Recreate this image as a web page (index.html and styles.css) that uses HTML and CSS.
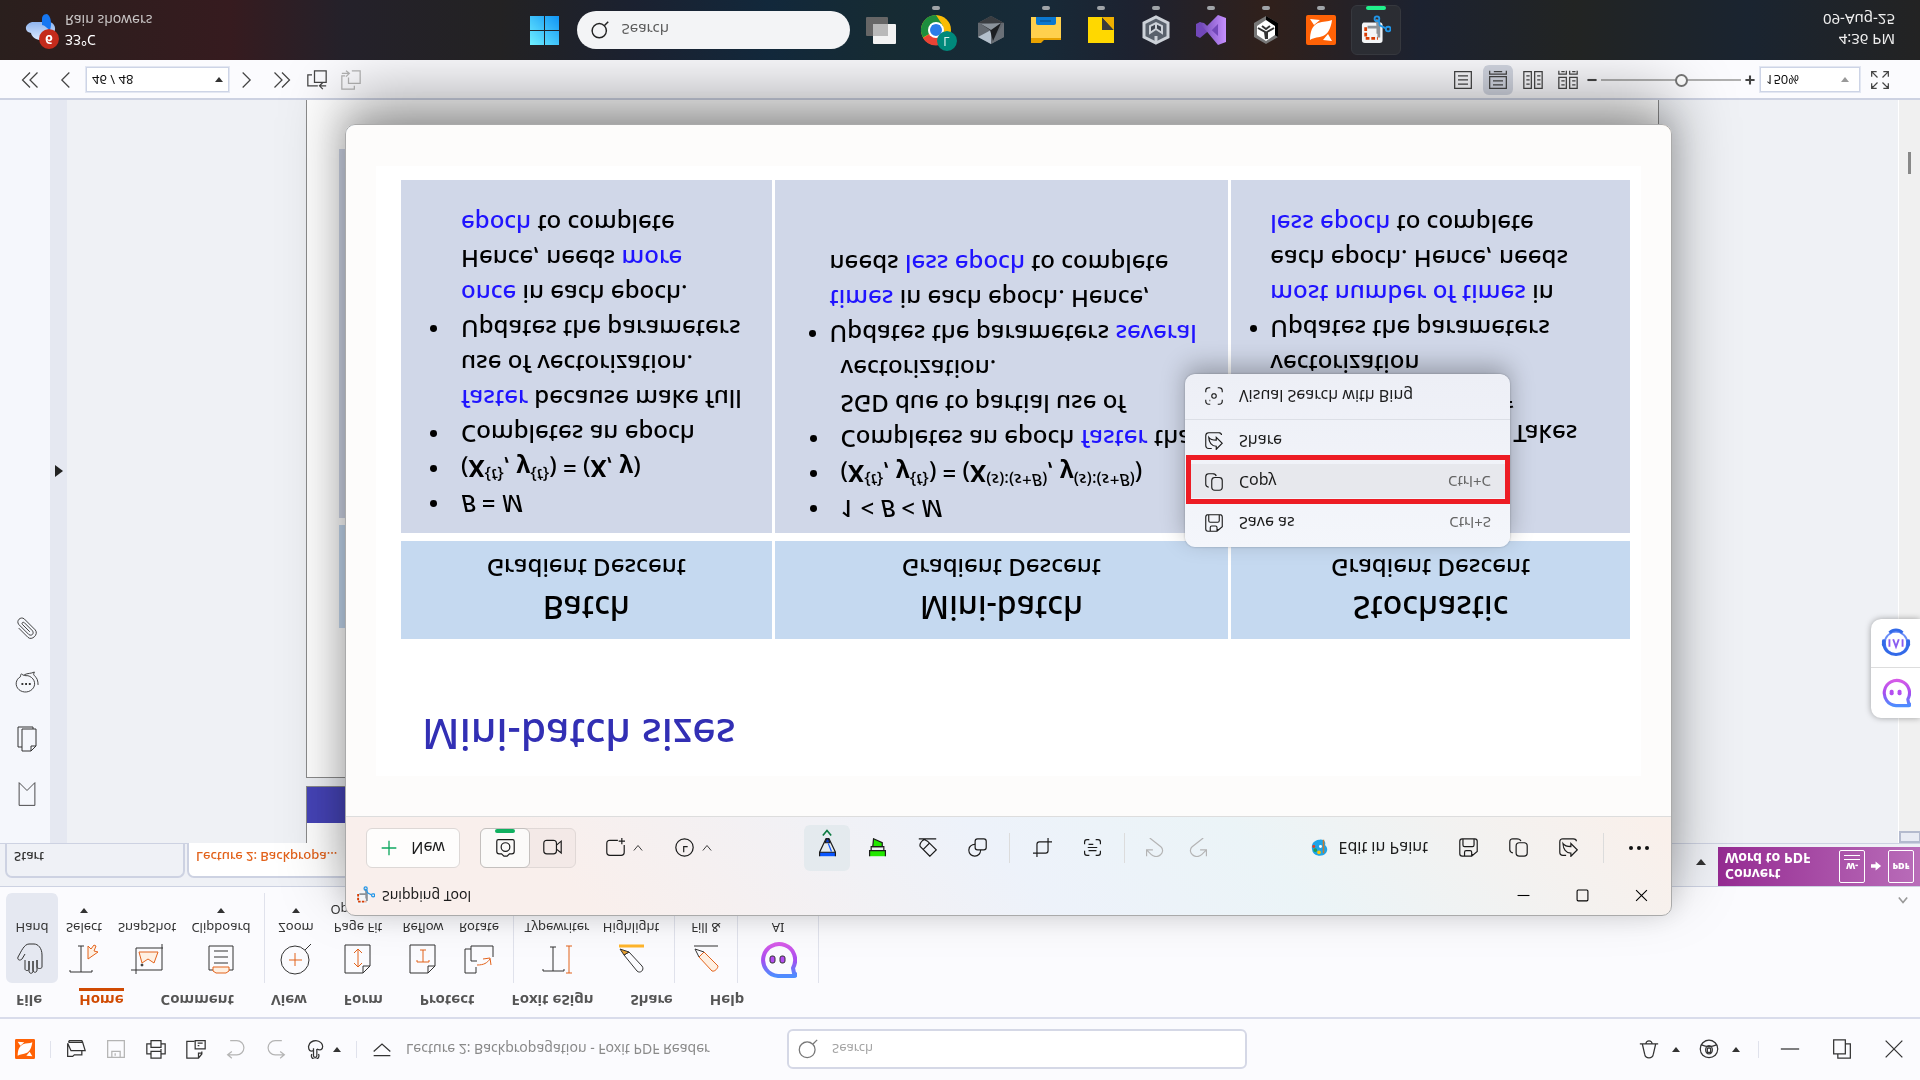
FILE: index.html
```html
<!DOCTYPE html>
<html lang="en">
<head>
<meta charset="utf-8">
<title>Lecture 2: Backpropagation - Foxit PDF Reader</title>
<link rel="stylesheet" href="styles.css">
</head>
<body>
<svg class="sprite" aria-hidden="true">
  <defs>
    <linearGradient id="g-ai" x1="0" y1="0" x2="0" y2="1"><stop offset="0" stop-color="#4d8dff"/><stop offset=".5" stop-color="#a64df0"/><stop offset="1" stop-color="#d65ae8"/></linearGradient>
    <linearGradient id="g-cloud" x1="0" y1="0" x2="0" y2="1"><stop offset="0" stop-color="#dbe9ff"/><stop offset="1" stop-color="#8fb4ee"/></linearGradient>
    <linearGradient id="g-vs" x1="0" y1="0" x2="1" y2="0"><stop offset="0" stop-color="#6a45b0"/><stop offset="1" stop-color="#c690ff"/></linearGradient>
    <linearGradient id="g-start" x1="0" y1="0" x2="1" y2="1"><stop offset="0" stop-color="#6ff0ff"/><stop offset="1" stop-color="#1094f5"/></linearGradient>
  </defs>
  <symbol id="foxit" viewBox="0 0 30 30"><rect width="30" height="30" rx="2" fill="#ff6206"/><path d="M4 5c0 8 2 14 8 17 5 2 10 1 14 3-1-8-4-14-9-16-4-2-9-1-13-4z" fill="#fff"/><path d="M17 5l9-1-4 7zM4 26l10-1-6-5z" fill="#fff"/></symbol>
  <symbol id="open" viewBox="0 0 24 24"><path d="M2 19V3h6l2 2h9v5M2 19l4-9h17l-3 10H3M3 20l1 2h15l1-2"/></symbol>
  <symbol id="disk" viewBox="0 0 24 24"><path d="M2 2h20v20H2zM7 2v7h10V2M11 4v3"/></symbol>
  <symbol id="printer" viewBox="0 0 24 24"><path d="M6 6V1h12v5M6 18H1V6h5M18 6h5v12h-5M6 1v8h12V1M6 14v8h12v-8zM17 11h2"/></symbol>
  <symbol id="pagecopy" viewBox="0 0 24 24"><path d="M10 21H1V1h14l4 5v3M15 1v6h4M11 12h12v10H11zM14 19h6M14 16h2"/></symbol>
  <symbol id="undo" viewBox="0 0 24 24"><path d="M7 1 2 5l5 4M2 5h11a8 8 0 0 1 0 17H5"/></symbol>
  <symbol id="redo" viewBox="0 0 24 24"><path d="m17 1 5 4-5 4M22 5H11a8 8 0 0 0 0 17h8"/></symbol>
  <symbol id="touch" viewBox="0 0 24 24"><path d="M9 13V4a2 2 0 0 1 4 0v8M9 10c-4-2-6 1-6 5 1 4 4 7 9 7s8-4 8-7c0-4-3-5-7-3M7 6a4.500 4.500 0 1 1 8 0"/></symbol>
  <symbol id="dropline" viewBox="0 0 24 24"><path d="M2 4h20M2 9l10 9 10-9"/></symbol>
  <symbol id="search" viewBox="0 0 24 24"><circle cx="11" cy="11" r="9.500"/><path d="m18 18 5 5"/></symbol>
  <symbol id="bell" viewBox="0 0 24 24"><path d="M1 18h22M4 18 7 5c1-5 9-5 10 0l3 13M8 18c1 5 7 5 8 0"/></symbol>
  <symbol id="account" viewBox="0 0 24 24"><circle cx="12" cy="12" r="10.500"/><ellipse cx="12" cy="11" rx="4" ry="5"/><path d="M3 17c6-3 12-3 18 0M10 8v5h4V8z"/></symbol>
  <symbol id="restore" viewBox="0 0 24 24"><path d="M2 6h14v17H2zM7 6V1h15v17h-6"/></symbol>
  <symbol id="close" viewBox="0 0 24 24"><path d="m2 2 20 20M22 2 2 22"/></symbol>
  <symbol id="minus" viewBox="0 0 24 24"><path d="M1 12h22"/></symbol>
  <symbol id="square" viewBox="0 0 24 24"><rect x="2" y="2" width="20" height="20" rx="2"/></symbol>
  <symbol id="hand" viewBox="0 0 32 32"><path d="M9 15V6c0-2 4-2 4 0v8-10c0-3 4-3 4 0v10V5c0-3 4-3 4 0v10V8c0-2 5-2 5 0v12c0 7-4 11-8 11h-5c-5 0-8-8-11-13-1-3 2-4 4-2l3 5"/></symbol>
  <symbol id="select" viewBox="0 0 32 32"><path d="M2 5V3h22v2M13 3v26M10 29h6"/><path class="o of" d="M20 16v13l3-3 3 4 2-1-2-5 4-1z"/></symbol>
  <symbol id="snapshot" viewBox="0 0 32 32"><path d="M0 5h31v26M5 1v26h28"/><path class="o of" d="M8 23l3-11 6 4 6-4 4 11z"/><circle cx="11" cy="10" r="1" fill="#444"/></symbol>
  <symbol id="clipboard" viewBox="0 0 32 32"><path d="M4 5h24v24H4zM9 12h14M9 18h14M9 24h14"/><path class="o of" d="M8 4l3-2h10l3 2v4H8z"/></symbol>
  <symbol id="zoomin" viewBox="0 0 32 32"><circle cx="15" cy="15" r="14"/><path d="m25 25 6 6"/><path class="o" d="M9 15h13M15 9v13"/></symbol>
  <symbol id="pagefit" viewBox="0 0 32 32"><path d="M3 2h18l7 7v21H3zM21 2v7h7"/><path class="o" d="M16 8v18M12 12l4-4 4 4M12 22l4 4 4-4"/></symbol>
  <symbol id="reflow" viewBox="0 0 32 32"><path d="M3 2h18l7 7v21H3zM21 2v7h7"/><path class="o" d="M10 15v-2h12v2M16 13v12M13 25h6"/></symbol>
  <symbol id="rot" viewBox="0 0 32 32"><path d="M13 8V2H2v24h6M14 14H8v15h22V18"/><path class="o" d="M14 10c7 0 10 2 13 6M20 16l7 1 1-7"/></symbol>
  <symbol id="typewriter" viewBox="0 0 32 32"><path d="M2 6V4h21v2M12 4v24M9 28h6"/><path class="o" d="M25 2h6M28 2v27M25 29h6"/></symbol>
  <symbol id="marker" viewBox="0 0 32 32"><path d="M9 20 22 4c3-3 8 1 5 5L14 23z"/><path d="M9 20l5 3-9 3z" fill="#e8a030"/><path d="M4 29h25" style="stroke:#ffb52b;stroke-width:3"/></symbol>
  <symbol id="pencil" viewBox="0 0 32 32"><path class="o of" d="M9 18 22 4c3-1 6 3 6 5L14 23z"/><path d="M9 18l-4 8 9-3M4 29h24"/></symbol>
  <symbol id="aiface" viewBox="0 0 38 38"><path d="M19 3H35c2 0 2 2 0 3l-1 5A16 16 0 1 1 19 3z" fill="none" stroke="url(#g-ai)" stroke-width="4" stroke-linejoin="round"/><rect x="11" y="16" width="5" height="7" rx="2" fill="#b44df0"/><rect x="21" y="16" width="5" height="7" rx="2" fill="#b44df0"/></symbol>
  <symbol id="headset" viewBox="0 0 32 32"><circle cx="16" cy="16" r="12" fill="#fff" stroke="#6a8df8" stroke-width="2"/><path d="M3 15C4 0 28 0 29 15M9 27c4 4 10 4 14 0" fill="none" stroke="#336ae8" stroke-width="3"/><path d="M9 12v8M13 20l3-8 3 8M23 12v8" fill="none" stroke="#8a5cf0" stroke-width="2"/><rect x="1" y="12" width="4" height="8" rx="2" fill="#336ae8"/><rect x="27" y="12" width="4" height="8" rx="2" fill="#336ae8"/></symbol>
  <symbol id="bookmark" viewBox="0 0 24 32"><path d="M3 3h18v26l-9-9-9 9z"/></symbol>
  <symbol id="pages" viewBox="0 0 24 28"><path d="M7 2h9l5 5v17H7zM16 2v5h5M7 6H3v20h15v-2"/></symbol>
  <symbol id="comments" viewBox="0 0 26 26"><path d="M6 21A10 9 0 1 1 14 22c-3 0-5 0-7 2-1-1-1-2-1-3zM10 23c4 2 7 1 11 3-1-2-1-3 0-4 3-2 4-6 4-10"/><path d="M7 13h2M11 13h2M15 13h2" style="stroke-width:2"/></symbol>
  <symbol id="clip" viewBox="0 0 26 26"><path d="M4 14 14 4c4-4 12 3 8 8L10 24c-4 3-9-2-6-6L15 7c3-2 6 1 4 4L10 20c-2 1-3-1-2-2l8-8"/></symbol>
  <symbol id="dbl-left" viewBox="0 0 24 24"><path d="M12 3l-9 9 9 9M21 3l-9 9 9 9"/></symbol>
  <symbol id="left" viewBox="0 0 24 24"><path d="m16 3-9 9 9 9"/></symbol>
  <symbol id="right" viewBox="0 0 24 24"><path d="m8 3 9 9-9 9"/></symbol>
  <symbol id="dbl-right" viewBox="0 0 24 24"><path d="m12 3 9 9-9 9M3 3l9 9-9 9"/></symbol>
  <symbol id="prevview" viewBox="0 0 24 24"><path d="M13 5H1v13h5M9 9h14v14H9zM23 5h-8M19 1l-4 4 4 4"/></symbol>
  <symbol id="nextview" viewBox="0 0 24 24"><path d="M13 23h10V8H9v7M5 17H1V1h15v4M1 20h9M6 16l4 4-4 3"/></symbol>
  <symbol id="single" viewBox="0 0 24 24"><path d="M2 2h20v20H2zM6 7h12M6 12h12M6 17h12"/></symbol>
  <symbol id="cont" viewBox="0 0 24 24"><path d="M2 2h20v14H2zM6 6h12M6 11h12M2 23v-4h20v4M7 22h10"/></symbol>
  <symbol id="facing" viewBox="0 0 24 24"><path d="M1 2h9v20H1zM14 2h9v20h-9zM4 7h4M4 12h4M4 17h4M17 7h4M17 12h4M17 17h4"/></symbol>
  <symbol id="contfacing" viewBox="0 0 24 24"><path d="M1 2h9v13H1zM14 2h9v13h-9zM4 6h4M4 11h4M17 6h4M17 11h4M1 23v-4h9v4M14 23v-4h9v4M4 22h4M17 22h4"/></symbol>
  <symbol id="full" viewBox="0 0 24 24"><path d="M2 8V2h6M2 2l7 7M22 8V2h-6M22 2l-7 7M2 16v6h6M2 22l7-7M22 16v6h-6M22 22l-7-7"/></symbol>
  <symbol id="snip" viewBox="0 0 32 32"><rect x="1" y="2" width="22" height="22" rx="3" fill="#f3f5f7"/><path d="M5 19V7h13" fill="none" stroke="#d83b01" stroke-width="3" stroke-dasharray="4 2"/><path d="M7 19h12V8M18 12v8q0 5-2 7" fill="none" stroke="#8c9298" stroke-width="3"/><circle cx="17" cy="28" r="2.500" fill="none" stroke="#2196e8" stroke-width="2"/><circle cx="29" cy="17" r="2.500" fill="none" stroke="#2196e8" stroke-width="2"/><path d="m19 26 1-5 6-3" stroke="#2196e8" stroke-width="2" fill="none"/></symbol>
  <symbol id="plus" viewBox="0 0 24 24"><path d="M12 1v22M1 12h22"/></symbol>
  <symbol id="camera" viewBox="0 0 24 24"><path d="M4 4h3l3-3h4l3 3h3q3 0 3 3v13q0 2-2 2H3q-2 0-2-2V7q0-3 3-3z"/><circle cx="12" cy="12.500" r="5.500"/></symbol>
  <symbol id="video" viewBox="0 0 24 24"><rect x="1" y="4" width="16" height="17" rx="4"/><path d="m17 10 6-5v15l-6-5"/></symbol>
  <symbol id="rectmode" viewBox="0 0 24 24"><path d="M15 21H5q-4 0-4-4V6q0-4 4-4h14q4 0 4 4v9M20 16v8M16 20h8"/></symbol>
  <symbol id="clock" viewBox="0 0 24 24"><circle cx="12" cy="12" r="11"/><path d="M11 6v7h5"/></symbol>
  <symbol id="chevron" viewBox="0 0 12 12"><path d="m1 3 5 6 5-6"/></symbol>
  <symbol id="chevron-up" viewBox="0 0 12 12"><path d="m1 9 5-6 5 6"/></symbol>
  <symbol id="pen" viewBox="0 0 24 24"><path d="M2 1h20v5H2z" fill="#0a56ff" stroke="none"/><path d="M9 18h6l-2 6h-2z" fill="#0a3fd0"/><path d="M2 1v5l8 17h4l8-17V1M2 6h20"/><path d="m13 17 4-10" style="stroke:#0a56ff"/></symbol>
  <symbol id="hl" viewBox="0 0 24 24"><path d="M2 1h20v7H2z" fill="#22e600" stroke="none"/><path d="M6 13h12v5L7 23z" fill="#22e600"/><path d="M2 1v7h20V1M4 8v5h16V8"/></symbol>
  <symbol id="eraser" viewBox="0 0 24 24"><path d="M15 1 3 13c-2 3 2 8 5 9l4-2L23 9zM7 10l8 8M1 23h22"/></symbol>
  <symbol id="shapes" viewBox="0 0 24 24"><rect x="9" y="9" width="14" height="14" rx="3"/><path d="M9 16a7.500 7.500 0 1 1 7-7"/></symbol>
  <symbol id="crop" viewBox="0 0 24 24"><path d="M5 0v16q0 3 3 3h16M0 5h16q3 0 3 3v16"/></symbol>
  <symbol id="text" viewBox="0 0 24 24"><path d="M2 8V5q0-3 3-3h3M16 2h3q3 0 3 3v3M22 16v3q0 3-3 3h-3M8 22H5q-3 0-3-3v-3M7 8h10M6 12h12M7 16h6"/></symbol>
  <symbol id="sundo" viewBox="0 0 24 24"><path d="M2 1v8h8M2 9l6-6c8-7 19 3 12 10L6 24"/></symbol>
  <symbol id="sredo" viewBox="0 0 24 24"><path d="M22 1v8h-8M22 9l-6-6C8-4 -3 6 4 13l14 11"/></symbol>
  <symbol id="paint" viewBox="0 0 24 24"><path d="M3 9C4 2 15-1 21 5c4 5 1 9-1 11 2 5-3 8-8 7C4 22 1 16 3 9z" fill="#1ea4e8"/><circle cx="7" cy="9" r="2.500" fill="#20a050"/><circle cx="12" cy="6" r="2.500" fill="#ffc400"/><circle cx="5" cy="14" r="2" fill="#e04020"/><circle cx="14" cy="14" r="2" fill="#fff"/><path d="M18 5v18" stroke="#c77a30" stroke-width="2"/></symbol>
  <symbol id="disk3" viewBox="0 0 24 24"><path d="M4 1h12l7 6v13q0 3-3 3H4q-3 0-3-3V4q0-3 3-3zM7 1v5q0 2 2 2h5q2 0 2-2V1M5 23v-8q0-2 2-2h10q2 0 2 2v8"/></symbol>
  <symbol id="copy" viewBox="0 0 24 24"><rect x="9" y="1" width="14" height="17" rx="4"/><path d="M5 5q-4 1-4 4v10q0 4 4 4h5q4 0 5-3"/></symbol>
  <symbol id="share" viewBox="0 0 24 24"><path d="M9 2H5Q1 2 1 6v13q0 4 4 4h13q4 0 4-3M15 1l8 8-8 8v-4c-5 0-8 1-10 4 0-7 4-12 10-12z"/></symbol>
  <symbol id="lens" viewBox="0 0 24 24"><path d="M1 7V5q0-4 4-4h2M17 1h2q4 0 4 4v2M23 17v2q0 4-4 4h-2M7 23H5q-4 0-4-4v-2"/><circle cx="12" cy="12" r="3"/><path d="M6 6h1" style="stroke-width:2"/></symbol>
</svg>

<div class="desktop">
  <main class="reader">
    <header class="titlebar">
      <div class="quick">
        <svg class="logo"><use href="#foxit"/></svg>
        <span class="vline"></span>
        <button aria-label="Open"><svg class="i"><use href="#open"/></svg></button>
        <button aria-label="Save" class="dim"><svg class="i"><use href="#disk"/></svg></button>
        <button aria-label="Print"><svg class="i"><use href="#printer"/></svg></button>
        <button aria-label="Copy page"><svg class="i"><use href="#pagecopy"/></svg></button>
        <button aria-label="Undo" class="dim"><svg class="i"><use href="#undo"/></svg></button>
        <button aria-label="Redo" class="dim"><svg class="i"><use href="#redo"/></svg></button>
        <button aria-label="Touch mode" class="pair"><svg class="i"><use href="#touch"/></svg><i class="tri"></i></button>
        <span class="vline"></span>
        <button aria-label="More" class="more"><svg class="i"><use href="#dropline"/></svg></button>
        <h1>Lecture 2: Backpropagation - Foxit PDF Reader</h1>
      </div>
      <label class="find"><svg class="i"><use href="#search"/></svg><input type="text" placeholder="Search" aria-label="Search"></label>
      <div class="caption">
        <button aria-label="Notifications" class="pair"><svg class="i"><use href="#bell"/></svg><i class="tri"></i></button>
        <button aria-label="Account" class="pair"><svg class="i"><use href="#account"/></svg><i class="tri"></i></button>
        <span class="vline"></span>
        <button aria-label="Minimize"><svg class="i"><use href="#minus"/></svg></button>
        <button aria-label="Restore"><svg class="i"><use href="#restore"/></svg></button>
        <button aria-label="Close"><svg class="i"><use href="#close"/></svg></button>
      </div>
    </header>

    <section class="ribbon">
      <nav class="menu">
        <a href="#">File</a><a href="#" class="on">Home</a><a href="#">Comment</a><a href="#">View</a><a href="#">Form</a><a href="#">Protect</a><a href="#">Foxit eSign</a><a href="#">Share</a><a href="#">Help</a>
      </nav>
      <div class="tools">
        <button class="w52 on"><svg><use href="#hand"/></svg>Hand</button>
        <button class="w52"><svg><use href="#select"/></svg>Select<i class="tri"></i></button>
        <button class="w74"><svg><use href="#snapshot"/></svg>SnapShot</button>
        <button class="w74"><svg><use href="#clipboard"/></svg>Clipboard<i class="tri"></i></button>
        <span class="vline"></span>
        <button class="w50"><svg><use href="#zoomin"/></svg>Zoom<i class="tri"></i></button>
        <button class="w74"><svg><use href="#pagefit"/></svg>Page Fit<span class="opt">Option<i class="tri"></i></span></button>
        <button class="w56"><svg><use href="#reflow"/></svg>Reflow</button>
        <button class="w56"><svg><use href="#rot"/></svg>Rotate</button>
        <span class="vline"></span>
        <button class="w74"><svg><use href="#typewriter"/></svg>Typewriter</button>
        <button class="w74"><svg><use href="#marker"/></svg>Highlight</button>
        <span class="vline"></span>
        <button class="w50"><svg><use href="#pencil"/></svg>Fill &amp;</button>
        <span class="vline"></span>
        <button class="w68"><svg class="ai"><use href="#aiface"/></svg>AI</button>
        <span class="vline"></span>
        <svg class="i collapse"><use href="#chevron-up"/></svg>
      </div>
    </section>

    <nav class="tabs">
      <a href="#">Start</a>
      <a href="#" class="on">Lecture 2: Backpropa...</a>
      <i class="tri"></i>
      <a href="#" class="promo"><span>Convert<br>Word to PDF</span><b class="doc">W-<i></i><i></i></b><svg class="arrow" viewBox="0 0 12 12"><path d="M0 4h5V1l6 5-6 5V8H0z"/></svg><b class="doc">PDF</b></a>
    </nav>

    <section class="work">
      <nav class="side">
        <button aria-label="Bookmarks"><svg><use href="#bookmark"/></svg></button>
        <button aria-label="Pages"><svg><use href="#pages"/></svg></button>
        <button aria-label="Comments"><svg><use href="#comments"/></svg></button>
        <button aria-label="Attachments"><svg><use href="#clip"/></svg></button>
      </nav>
      <div class="grip"><i></i></div>
      <div class="canvas">
        <div class="page prev"></div>
        <div class="page"><div class="p-head"></div><div class="p-body"></div></div>
      </div>
      <div class="scroll"><i class="split"></i><i class="thumb"></i></div>
    </section>

    <footer class="status">
      <button aria-label="First page"><svg class="i"><use href="#dbl-left"/></svg></button>
      <button aria-label="Previous page"><svg class="i"><use href="#left"/></svg></button>
      <span class="combo page-no"><select aria-label="Page"><option>46 / 48</option></select><i class="tri"></i></span>
      <button aria-label="Next page"><svg class="i"><use href="#right"/></svg></button>
      <button aria-label="Last page"><svg class="i"><use href="#dbl-right"/></svg></button>
      <button aria-label="Previous view" class="view"><svg class="i"><use href="#prevview"/></svg></button>
      <button aria-label="Next view" class="view dim"><svg class="i"><use href="#nextview"/></svg></button>
      <span class="fill"></span>
      <button aria-label="Single page" class="mode"><svg class="i"><use href="#single"/></svg></button>
      <button aria-label="Continuous" class="mode on"><svg class="i"><use href="#cont"/></svg></button>
      <button aria-label="Facing" class="mode"><svg class="i"><use href="#facing"/></svg></button>
      <button aria-label="Continuous facing" class="mode"><svg class="i"><use href="#contfacing"/></svg></button>
      <button aria-label="Zoom out" class="step"><svg><use href="#minus"/></svg></button>
      <input type="range" min="0" max="100" value="58" aria-label="Zoom">
      <button aria-label="Zoom in" class="step"><svg><use href="#plus"/></svg></button>
      <span class="combo zoom"><select aria-label="Zoom level"><option>150%</option></select><i class="tri"></i></span>
      <button aria-label="Full screen" class="fullscreen"><svg class="i"><use href="#full"/></svg></button>
    </footer>
  </main>

  <aside class="assist">
    <button aria-label="AI chat"><svg><use href="#aiface"/></svg></button>
    <button aria-label="AI support"><svg><use href="#headset"/></svg></button>
  </aside>

  <section class="snip">
    <header class="snip-title">
      <svg class="app"><use href="#snip"/></svg><span>Snipping Tool</span>
      <button aria-label="Minimize"><svg><use href="#minus"/></svg></button>
      <button aria-label="Maximize"><svg><use href="#square"/></svg></button>
      <button aria-label="Close"><svg><use href="#close"/></svg></button>
    </header>
    <div class="snip-bar">
      <div class="grp">
        <button class="new"><svg><use href="#plus"/></svg>New</button>
        <div class="seg"><button class="on" aria-label="Snip"><svg class="i"><use href="#camera"/></svg></button><button aria-label="Record"><svg class="i"><use href="#video"/></svg></button></div>
        <button class="drop" aria-label="Shape"><svg class="i"><use href="#rectmode"/></svg><svg class="ch"><use href="#chevron"/></svg></button>
        <button class="drop" aria-label="Delay"><svg class="i"><use href="#clock"/></svg><svg class="ch"><use href="#chevron"/></svg></button>
      </div>
      <div class="grp mid">
        <button class="sq on" aria-label="Pen"><svg class="i"><use href="#pen"/></svg><svg class="ch"><use href="#chevron"/></svg></button>
        <button class="sq" aria-label="Highlighter"><svg class="i"><use href="#hl"/></svg></button>
        <button class="sq" aria-label="Eraser"><svg class="i"><use href="#eraser"/></svg></button>
        <button class="sq" aria-label="Shapes"><svg class="i"><use href="#shapes"/></svg></button>
        <span class="vline"></span>
        <button class="sq" aria-label="Crop"><svg class="i"><use href="#crop"/></svg></button>
        <button class="sq" aria-label="Text actions"><svg class="i"><use href="#text"/></svg></button>
        <span class="vline"></span>
        <button class="sq dim" aria-label="Undo"><svg class="i"><use href="#sundo"/></svg></button>
        <button class="sq dim" aria-label="Redo"><svg class="i"><use href="#sredo"/></svg></button>
      </div>
      <div class="grp end">
        <button class="paint"><svg><use href="#paint"/></svg>Edit in Paint</button>
        <button class="sq" aria-label="Save"><svg class="i"><use href="#disk3"/></svg></button>
        <button class="sq" aria-label="Copy"><svg class="i"><use href="#copy"/></svg></button>
        <button class="sq" aria-label="Share"><svg class="i"><use href="#share"/></svg></button>
        <span class="vline"></span>
        <button class="sq dots" aria-label="More"><i></i><i></i><i></i></button>
      </div>
    </div>
    <div class="snip-body">
      <article class="slide">
        <h2>Mini-batch sizes</h2>
        <table>
          <colgroup><col class="c1"><col class="c2"><col class="c3"></colgroup>
          <thead><tr>
            <th><b>Batch</b><br>Gradient Descent</th>
            <th><b>Mini-batch</b><br>Gradient Descent</th>
            <th><b>Stochastic</b><br>Gradient Descent</th>
          </tr></thead>
          <tbody><tr>
            <td><ul>
              <li><em>B</em> = <em>M</em></li>
              <li>(<b>X</b><sup>{<em>t</em>}</sup>, <b>y</b><sup>{<em>t</em>}</sup>) = (<b>X</b>, <b>y</b>)</li>
              <li>Completes an epoch<br><mark>faster</mark> because make full<br>use of vectorization.</li>
              <li>Updates the parameters<br><mark>once</mark> in each epoch.<br>Hence, needs <mark>more</mark><br><mark>epoch</mark> to complete</li>
            </ul></td>
            <td><ul class="second">
              <li>1 &lt; <em>B</em> &lt; <em>M</em></li>
              <li>(<b>X</b><sup>{<em>t</em>}</sup>, <b>y</b><sup>{<em>t</em>}</sup>) = (<b>X</b><sup>(<em>s</em>):(<em>s+B</em>)</sup>, <b>y</b><sup>(<em>s</em>):(<em>s+B</em>)</sup>)</li>
              <li>Completes an epoch <mark>faster</mark> than<br>SGD due to partial use of<br>vectorization.</li>
              <li class="wide">Updates the parameters <mark>several</mark><br><mark>times</mark> in each epoch. Hence,<br>needs <mark>less epoch</mark> to complete</li>
            </ul></td>
            <td><ul class="third">
              <li class="cont"><span class="takes">Takes</span><span class="tail">of</span>vectorization</li>
              <li>Updates the parameters<br><mark>most number of times</mark> in<br>each epoch. Hence, needs<br><mark>less epoch</mark> to complete</li>
            </ul></td>
          </tr></tbody>
        </table>
      </article>
    </div>
    <menu class="context">
      <li><button><svg><use href="#disk3"/></svg>Save as<kbd>Ctrl+S</kbd></button></li>
      <li class="hot"><button><svg><use href="#copy"/></svg>Copy<kbd>Ctrl+C</kbd></button></li>
      <li><button><svg><use href="#share"/></svg>Share</button></li>
      <li class="last"><button><svg><use href="#lens"/></svg>Visual Search with Bing</button></li>
    </menu>
  </section>

  <footer class="taskbar">
    <div class="weather">
      <svg viewBox="0 0 34 38"><path d="M7 27c-8-2-8-10-1-11 2-9 16-9 18-2 8 1 8 11 1 13z" fill="url(#g-cloud)"/><path d="M17 24c3 0 4-3 8-5 2 6 1 14-3 16-4 0-5-3-5-5z" fill="#1677f2"/><circle cx="24" cy="10" r="10" fill="#c42b1c"/></svg>
      <b>6</b>
      <p><span>33°C</span><br>Rain showers</p>
    </div>
    <div class="dock">
      <button class="slot" aria-label="Start"><svg viewBox="0 0 30 30"><path d="M0 0h14v14H0zM15 0h14v14H15zM0 15h14v14H0zM15 15h14v14H15z" fill="url(#g-start)"/></svg></button>
      <label class="tsearch"><svg class="i"><use href="#search"/></svg><input type="text" placeholder="Search" aria-label="Search"></label>
      <div class="apps">
        <button class="slot" aria-label="Task view"><svg viewBox="0 0 30 30"><rect y="9" width="22" height="19" rx="1" fill="#666"/><rect x="7" y="1" width="23" height="20" rx="1" fill="#f2f2f2"/><rect x="7" y="9" width="15" height="12" fill="#b9b9b9"/></svg></button>
        <button class="slot run" aria-label="Chrome"><svg viewBox="0 0 30 30"><circle cx="15" cy="15" r="15" fill="#fbbc05"/><path d="M15 15 2 7a15 15 0 0 1 26 0z" fill="#ea4335"/><path d="M15 15 2 7.500A15 15 0 0 0 15 30l7-11z" fill="#1e8e3e"/><circle cx="15" cy="15" r="8" fill="#fff"/><circle cx="15" cy="15" r="6" fill="#2b7de9"/></svg><span class="badge">L</span></button>
        <button class="slot" aria-label="Cursor"><svg viewBox="0 0 30 30"><path d="M15 1l13 7v14l-13 7L2 22V8z" fill="#62686f"/><path d="M2 8l13-7v14z" fill="#b4c0cc"/><path d="M15 1l13 7v14z" fill="#6a7077"/><path d="M2 22l13 7 13-7z" fill="#3a3d41"/><path d="M5 21l20 1-8-18-3 11z" fill="#1c1e21"/><path d="m5 21 10-6 10 7z" fill="#8b939b"/></svg></button>
        <button class="slot run" aria-label="File Explorer"><svg viewBox="0 0 30 30"><path d="M0 2h10l3 3h17v23H0z" fill="#e8a200"/><path d="M0 7h30v21H0z" fill="#ffd04d"/><path d="M5 28v-6q0-2 2-2h16q2 0 2 2v6z" fill="#0b78d0"/><path d="M9 24h11" stroke="#064a88"/></svg></button>
        <button class="slot run" aria-label="Sticky Notes"><svg viewBox="0 0 30 30"><path d="M2 2h26v26H2z" fill="#ffd800"/><path d="M16 28V15h12z" fill="#3b3b3b"/><path d="M16 28l12-13v13z" fill="#f0b000"/></svg></button>
        <button class="slot run" aria-label="Unity Hub"><svg viewBox="0 0 30 30"><path d="m15 2 12 6v14l-12 6-12-6V8z" fill="#59616c" stroke="#ccd1d8" stroke-width="3"/><path d="m15 16 6-4v7l-6 3-6-3v-7zM15 16v6" fill="#3c434d" stroke="#ccd1d8" stroke-width="2"/><path d="M15 3v6" fill="none" stroke="#ccd1d8" stroke-width="3"/></svg></button>
        <button class="slot run" aria-label="Visual Studio"><svg viewBox="0 0 30 30"><path d="M0 9l4-2 18 15V8L4 23l-4-2z" fill="#7248b9"/><path d="M22 0l8 3v24l-8 3L10 18l5-4 7 7V9L8 22l-5 1L22 0z" fill="url(#g-vs)"/></svg></button>
        <button class="slot run" aria-label="Unity"><svg viewBox="0 0 30 30"><path d="m15 1 12 7v14l-12 7-12-7V8z" fill="#777"/><path d="M15 15l12-7v14l-12 7z" fill="#000"/><path d="m15 4 9 6v9l-9 6-9-6v-9z" fill="#fff"/><path d="m15 6-1 7-7 4M16 6v7l7 4M11 19l4-3 4 3" fill="none" stroke="#333" stroke-width="2"/></svg></button>
        <button class="slot run" aria-label="Foxit"><svg><use href="#foxit"/></svg></button>
        <button class="slot run live" aria-label="Snipping Tool"><svg><use href="#snip"/></svg></button>
      </div>
    </div>
    <p class="tray">4:36 PM<br>09-Aug-25</p>
  </footer>
</div>
</body>
</html>
```
FILE: styles.css
```css
* { box-sizing: border-box; }
html, body { margin: 0; height: 100%; overflow: hidden; }
body { font: 13px/18px "Noto Sans", "Open Sans", sans-serif; color: #333; background: #fbfbfe; }
button { border: 0; padding: 0; margin: 0; background: none; font: inherit; color: inherit; display: flex; align-items: center; justify-content: center; }
a { color: inherit; text-decoration: none; }
input, select { font: inherit; color: inherit; border: 0; background: none; padding: 0; outline: 0; }
h1, h2, p, menu, ul { margin: 0; padding: 0; list-style: none; }
svg { fill: none; stroke: currentColor; flex: none; overflow: visible; }
.taskbar svg, .logo, .app { stroke: none; }
.sprite { position: absolute; width: 0; height: 0; }
.i { width: 20px; height: 20px; stroke-width: 1.5; }
.o { stroke: #e2621b; }
.of { fill: #fff0e2; }
.dim { color: #b4b4b4; }
.tri { width: 0; height: 0; border: 4px solid transparent; border-top: 5px solid #333; border-bottom: 0; }
.vline { width: 1px; flex: none; background: #e0e2ec; }

/* the whole desktop is shown upside down */
.desktop { position: relative; height: 100vh; display: flex; flex-direction: column; transform: scaleY(-1); }
.reader { flex: 1; min-height: 0; display: flex; flex-direction: column; }

.titlebar { height: 63px; display: flex; align-items: center; border-bottom: 2px solid #d9dceb; }
.quick { flex: 0 0 787px; display: flex; align-items: center; padding-left: 15px; gap: 20px; }
.quick .vline, .caption .vline { height: 17px; }
.quick .vline { margin: 0 -5px; }
.quick .pair { gap: 7px; }
.quick h1 { font-size: 14px; font-weight: 400; color: #8a8a8a; margin-left: -6px; white-space: nowrap; }
.logo { width: 20px; height: 20px; }
.find { flex: 0 0 460px; height: 40px; display: flex; align-items: center; gap: 14px; padding-left: 9px; border: 2px solid #d5d8e6; border-radius: 6px; background: #fff; color: #777; }
.find input { flex: 1; }
.find input::placeholder { color: #a5a5a5; opacity: 1; }
.caption { margin-left: auto; display: flex; align-items: center; gap: 32px; padding-right: 16px; }
.caption .pair { gap: 13px; margin-right: -13px; }
.caption .vline { margin: 0 -11px 0 -1px; }

.ribbon { height: 130px; }
.menu { display: flex; gap: 37px; padding-left: 16px; height: 34px; font-size: 15px; font-weight: 700; color: #555; }
.menu a { height: 29px; padding-top: 7px; line-height: 18px; }
.menu .on { color: #d04a02; border-bottom: 3px solid #d04a02; }
.tools { display: flex; height: 92px; padding-left: 6px; }
.tools button { flex-direction: column; justify-content: flex-start; height: 90px; padding-top: 8px; line-height: 18px; border-radius: 6px; }
.tools button svg { width: 32px; height: 32px; margin-bottom: 6px; }
.tools .ai { width: 38px; height: 38px; margin: -4px 0 4px; }
.tools .on { background: #e5e8f1; }
.tools .tri { margin-top: 6px; }
.tools .opt { display: flex; align-items: center; gap: 5px; }
.tools .opt .tri { margin: 0; }
.tools .vline { height: 90px; margin: 0 6px; }
.tools .collapse { width: 10px; height: 10px; margin: 78px 12px 0 auto; stroke-width: 2; color: #999; }
.w50 { width: 50px; } .w52 { width: 52px; } .w56 { width: 56px; } .w68 { width: 68px; } .w74 { width: 74px; }

.tabs { height: 44px; display: flex; align-items: flex-end; padding-left: 5px; gap: 2px; background: #eff1f6; border-top: 1px solid #cdd2e2; border-bottom: 1px solid #cdd2e2; }
.tabs a { width: 180px; height: 34px; padding: 11px 7px; border: 1px solid #cdd2e2; border-width: 2px 2px 0; border-radius: 7px 7px 0 0; line-height: 16px; font-weight: 500; white-space: nowrap; }
.tabs .on { background: #fff; color: #e2621b; margin-bottom: -1px; height: 35px; }
.tabs .tri { margin: 0 10px 15px auto; border-width: 6px 5px 0; }
.tabs .promo { width: 202px; height: 39px; margin-bottom: 3px; padding: 0 6px 0 7px; border: 0; border-radius: 0; display: flex; align-items: center; gap: 6px; color: #fff; font-size: 14px; font-weight: 700; background: linear-gradient(90deg, #952b92, #b96db9); }
.promo span { flex: 1; }
.doc { width: 26px; height: 33px; border: 1px solid #fff; border-radius: 2px; font-size: 9px; line-height: 12px; padding-top: 10px; text-align: center; }
.doc i { display: block; height: 1px; background: #fff; margin: 0 4px 3px; }
.arrow { width: 11px; height: 12px; fill: #fff; stroke: none; }

.work { flex: 1; min-height: 0; display: flex; background: #eff1f5; }
.side { width: 50px; background: #f5f7fc; display: flex; flex-direction: column; align-items: center; padding: 32px 0 0 4px; gap: 21px; color: #333; }
.side button { height: 34px; }
.side svg { width: 24px; height: 28px; }
.grip { width: 17px; background: #e5e8f1; display: flex; align-items: center; justify-content: center; }
.grip i { border: 6px solid transparent; border-left: 8px solid #222; border-right: 0; }
.canvas { flex: 1; display: flex; flex-direction: column; align-items: center; gap: 8px; overflow: hidden; }
.page { width: 1353px; max-width: 90%; flex: 1; border: 1px solid #8b8b8b; border-width: 1px 1px 0; background: #fff; padding: 149px 32px 0; }
.page.prev { flex: 0 0 57px; padding: 0; border-width: 0 1px 1px; background: linear-gradient(#fff 20px, #4644b8 20px); }
.p-head { height: 103px; background: #c5d9f0; margin-bottom: 7px; }
.p-body { height: 369px; background: #d0d7e8; }
.scroll { width: 22px; background: #f0f0f0; border-left: 1px solid #fff; display: flex; flex-direction: column; justify-content: space-between; align-items: center; padding-bottom: 52px; }
.split { width: 22px; height: 12px; border: 2px solid #b3bace; background: #e8ebf4; }
.thumb { width: 3px; height: 22px; background: #888; }

.status { height: 40px; display: flex; align-items: center; border-top: 2px solid #cdd2e2; background: #fbfbfe; padding: 0 30px 2px 20px; gap: 16px; color: #444; }
.status .dim { color: #b4b4b4; }
.combo { display: flex; align-items: center; height: 25px; border: 1px solid #cdd4e6; background: #fff; padding: 0 5px; color: #111; box-shadow: 0 0 0 1px #e3e7f2; }
.combo select { flex: 1; appearance: none; }
.page-no { width: 143px; margin-left: -6px; margin-right: -9px; }
.zoom { width: 100px; }
.zoom .tri { border-top-color: #999; margin-right: 5px; }
.view { margin-left: -1px; }
.view + .view { margin-left: -2px; }
.fill { flex: 1; }
.mode { width: 30px; height: 30px; border-radius: 6px; margin-right: -11px; }
.mode.on { background: #d3d7e2; }
.step { width: 10px; height: 20px; margin-right: -12px; }
.step svg { width: 10px; height: 10px; stroke-width: 5; }
.step + .combo { margin-left: 1px; }
.mode + .step { margin-left: -1px; }
.status input { appearance: none; width: 140px; height: 20px; margin: 0 -12px 0 0; }
.status input::-webkit-slider-runnable-track { height: 2px; background: #b0b0b0; }
.status input::-webkit-slider-thumb { appearance: none; width: 13px; height: 13px; margin-top: -6px; border: 2px solid #777; border-radius: 50%; background: #fff; }
.fullscreen { margin-left: -6px; }

.assist { position: absolute; right: 0; top: 362px; width: 49px; height: 99px; border-radius: 10px 0 0 10px; background: #fff; box-shadow: 0 0 6px rgba(0,0,0,.35); display: grid; grid-template-rows: 1fr 1fr; }
.assist button + button { border-top: 1px solid #ddd; }
.assist svg { width: 30px; height: 30px; stroke: none; }

.snip { position: absolute; left: 345px; right: 248px; top: 164px; border: 1px solid #aaa; border-radius: 10px; color: #1b1b1b; font-size: 14px; background: linear-gradient(135deg, #f9efec 12%, #edf2fa 34%, #ebf4f7 46%, #f9f0eb 66%, #faf2ea); box-shadow: 0 30px 64px rgba(0,0,0,.34), 0 4px 30px rgba(0,0,0,.16); }
.snip-title { height: 38px; display: flex; align-items: center; padding-left: 9px; }
.snip-title .app { width: 20px; height: 20px; }
.snip-title span { flex: 1; margin-left: 7px; }
.snip-title button { width: 59px; height: 38px; color: #000; }
.snip-title button svg { width: 13px; height: 13px; stroke-width: 2; }
.snip-bar { height: 60px; display: grid; grid-template-columns: 1fr auto 1fr; align-items: center; padding: 0 9px 2px 20px; }
.snip-bar button { font-size: 16px; }
.snip-bar .i { width: 19px; height: 19px; }
.grp { display: flex; align-items: center; gap: 4px; }
.grp .vline { height: 30px; margin: 0 5px; background: #dcdcdc; }
.grp .ch { width: 10px; height: 10px; }
.mid { margin-left: -6px; }
.end { justify-content: flex-end; }
.end .vline { margin: 0 8px; }
.new { width: 94px; height: 40px; gap: 14px; border: 1px solid #ddd8d6; border-radius: 6px; background: #fefdfc; margin-right: 16px; }
.new svg { width: 16px; height: 16px; color: #10a860; stroke-width: 2; }
.seg { display: flex; height: 40px; width: 96px; border: 1px solid #e0d8d6; border-radius: 6px; background: #f3e9e7; margin-right: 26px; }
.seg button { flex: 1; border-radius: 6px; margin: -1px; position: relative; }
.seg .on { background: #fbfaf9; border: 1px solid #c4c0be; }
.seg .on::after { content: ""; position: absolute; bottom: 0; width: 20px; height: 4px; border-radius: 2px; background: #10b060; }
.drop { gap: 8px; margin-right: 28px; }
.sq { width: 46px; height: 46px; border-radius: 6px; position: relative; }
.mid .dim { width: 40px; }
.sq.on { background: #e4eaee; }
.sq.on .ch { position: absolute; bottom: 3px; color: #0a7a40; stroke-width: 2; }
.paint { gap: 11px; margin-right: 13px; }
.paint svg { width: 18px; height: 22px; stroke: none; }
.dots { gap: 4px; }
.dots i { width: 4px; height: 4px; border-radius: 50%; background: #111; }
.snip-body { padding: 40px 30px 41px; border-top: 1px solid #ddd; border-radius: 0 0 10px 10px; background: #fdfcfb; }
.slide { background: #fff; padding: 13px 8px 6px 22px; color: #000; }
.slide h2 { font-size: 41px; line-height: 56px; font-weight: 500; color: #322fb4; margin: 0 0 60px 24px; }
.slide table { width: 100%; table-layout: fixed; border-spacing: 3px 8px; font-size: 24px; line-height: 35px; font-weight: 500; }
.c1 { width: 30.3%; } .c2 { width: 37.1%; } .c3 { width: 32.6%; }
.slide th { height: 98px; padding: 12px 0 0; background: #c5d9f0; font-weight: 500; line-height: 37px; vertical-align: top; }
.slide th b { font-size: 32px; font-weight: 500; }
.slide td { height: 353px; padding: 11px 0 0; background: #d0d7e8; vertical-align: top; white-space: nowrap; }
.slide td ul { padding-left: 60px; }
.slide td .second { padding-left: 66px; margin-top: -5px; }
.slide td .third { padding-left: 39px; }
.slide li { position: relative; }
.slide li::before { content: ""; position: absolute; left: -31px; top: 15px; width: 7px; height: 7px; border-radius: 50%; background: #000; }
.slide .wide { margin-left: -11px; }
.slide .wide::before { left: -21px; }
.slide .third li::before { left: -20px; }
.slide .third .cont::before { content: none; }
.slide sup { font-size: 17px; line-height: 0; }
.slide mark { background: none; color: #2014ff; }
.cont { padding-top: 70px; }
.takes { display: block; padding-left: 243px; }
.tail { display: block; width: 242px; text-align: right; }

.context { position: absolute; left: 839px; top: 368px; width: 325px; padding: 4px 0 2px; border-radius: 10px; background: linear-gradient(#f4f6fb, #edeff6); box-shadow: 0 8px 24px rgba(0,0,0,.28), 0 0 2px rgba(0,0,0,.3); font-size: 16px; }
.context li { height: 41px; position: relative; }
.context button { width: 100%; height: 41px; padding: 0 19px 2px 20px; justify-content: flex-start; }
.context svg { width: 18px; height: 18px; margin-right: 16px; stroke-width: 1.5; }
.context kbd { margin-left: auto; font: inherit; font-size: 15px; color: #666; }
.context .hot button { background: linear-gradient(#e7e8ed, #e7e8ed) center / 314px 34px no-repeat; }
.context .hot::after { content: ""; position: absolute; inset: -2px 0 -6px 1px; border: 5px solid #ed1c24; }
.context .last { border-top: 1px solid #dcdfe6; height: 44px; padding-top: 3px; }

.taskbar { position: relative; height: 60px; display: grid; grid-template-columns: 1fr auto 1fr; align-items: center; color: #eee; font-size: 14px; line-height: 20px; background: linear-gradient(90deg, #2a1f1d, #361b1f 12%, #24212a 18%, #232223 26%, #1b2130 33%, #12283b 40%, #162b33 46%, #172a38 54%, #1d2230 59%, #30201b 66%, #1c2230 74%, #222423 82%, #1a2430 91%, #232323); }
.weather { display: flex; align-items: center; padding-left: 25px; gap: 6px; color: #c8c4c4; position: relative; }
.weather svg { width: 34px; height: 38px; }
.weather b { position: absolute; left: 39px; width: 20px; top: 0; text-align: center; font-size: 13px; color: #fff; }
.weather span { color: #fff; }
.dock, .apps { display: flex; align-items: center; }
.apps { gap: 5px; margin-left: 6px; }
.slot { width: 50px; height: 50px; border-radius: 6px; position: relative; }
.slot svg { width: 30px; height: 30px; }
.run::after { content: ""; position: absolute; bottom: 1px; width: 8px; height: 4px; border-radius: 2px; background: #a0a4a8; }
.live { background: #2b2d33; border: 1px solid #36383e; }
.live::after { width: 20px; bottom: 0; background: #21f08c; }
.badge { position: absolute; left: 26px; top: 4px; width: 20px; height: 20px; border-radius: 50%; background: #00897b; color: #d8f0ec; font-size: 12px; }
.tsearch { width: 273px; height: 38px; margin-left: 7px; display: flex; align-items: center; gap: 12px; padding-left: 13px; border-radius: 19px; background: #f3f4f6; color: #222; font-size: 15px; }
.tsearch svg.i { stroke: #222; stroke-width: 2; width: 20px; height: 18px; }
.tsearch input { width: 200px; }
.tsearch input::placeholder { color: #5c5c5c; opacity: 1; }
.tray { text-align: right; padding-right: 25px; font-size: 15px; }
```
